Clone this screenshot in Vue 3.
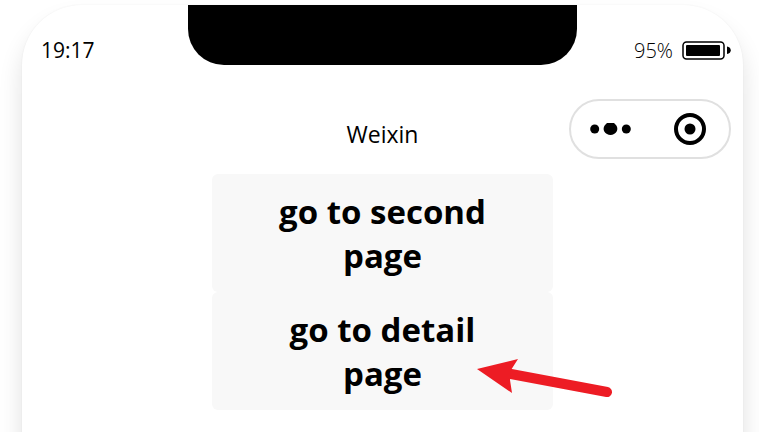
<script setup>
const time = '19:17'
const battery = 95
const title = 'Weixin'
const pages = [
  { name: 'second', marked: false },
  { name: 'detail', marked: true },
]
</script>

<template>
  <div class="stage">
    <div class="phone">
      <header class="status">
        <span class="time">{{ time }}</span>
        <div class="notch"></div>
        <div class="power">
          <span class="percent">{{ battery }}%</span>
          <svg class="battery" width="49" height="20" viewBox="0 0 49 20" aria-hidden="true">
            <rect x="1" y="1" width="41" height="17" rx="3.5" fill="#fff" stroke="#000" stroke-width="1.5" />
            <rect x="4" y="4" width="34" height="11" rx="1" fill="#000" />
            <path d="M45 5.5c5 .5 5 7 0 7.5z" fill="#000" />
          </svg>
        </div>
      </header>

      <nav class="navbar">
        <h1 class="title">{{ title }}</h1>
        <div class="capsule">
          <button class="capsule-button" type="button" aria-label="More">
            <svg width="42" height="14" viewBox="0 0 42 14">
              <circle cx="4.7" cy="7" r="4.5" />
              <path d="M17 .9h7c4.500 3.500 4.500 8.500 0 11-2 1.300-5 1.300-7 0-4.500-2.500-4.500-7.500 0-11z" />
              <circle cx="36.3" cy="7" r="4.5" />
            </svg>
          </button>
          <button class="capsule-button" type="button" aria-label="Close">
            <svg width="32" height="32" viewBox="0 0 32 32">
              <circle cx="16" cy="16" r="14" fill="none" stroke="#000" stroke-width="4" />
              <circle cx="16" cy="16" r="5.5" />
            </svg>
          </button>
        </div>
      </nav>

      <main class="content">
        <div v-for="page in pages" :key="page.name" class="entry">
          <button class="go" type="button">go to {{ page.name }} page</button>
          <svg v-if="page.marked" class="arrow" width="138" height="44" viewBox="0 0 138 44" aria-hidden="true">
            <path d="M35 17L131 35" stroke="#ed1c24" stroke-width="10" stroke-linecap="round" />
            <path d="M1 12L42 2L35 13L34 23L36 36z" fill="#ed1c24" />
          </svg>
        </div>
      </main>
    </div>
  </div>
</template>

<style>
body {
  background: #fff;
}
</style>

<style scoped>
.stage {
  box-sizing: border-box;
  height: 100vh;
  padding: 5px 16px 0 22px;
  overflow: hidden;
  font-family: "Open Sans", "Noto Sans", sans-serif;
  color: #000;
}

.phone {
  min-height: 120vh;
  border-radius: 60px;
  background: #fff;
  box-shadow: 0 0 2px rgba(0, 0, 0, 0.06), 0 16px 24px rgba(0, 0, 0, 0.12);
}

.status {
  display: grid;
  grid-template-columns: 1fr 54% 1fr;
}

.time {
  padding: 30px 0 0 19px;
  font-size: 21px;
  line-height: 30px;
}

.notch {
  height: 60px;
  border-radius: 0 0 36px 36px;
  background: #000;
}

.power {
  display: flex;
  justify-content: flex-end;
  align-items: center;
  gap: 9px;
  padding: 32px 12px 0 0;
}

.percent {
  font-size: 20px;
  font-weight: 300;
  line-height: 28px;
}

.battery {
  flex: none;
}

.navbar {
  display: grid;
  grid-template-columns: 1fr auto 1fr;
  align-items: center;
  padding: 34px 12px 15px;
}

.title {
  grid-column: 2;
  margin: 0;
  padding-top: 10px;
  font-size: 23px;
  font-weight: 400;
  line-height: 32px;
}

.capsule {
  justify-self: end;
  display: grid;
  grid-template-columns: 1fr 1fr;
  box-sizing: border-box;
  width: 162px;
  height: 60px;
  border: 2px solid #e0e0e0;
  border-radius: 30px;
}

.capsule-button {
  display: flex;
  align-items: center;
  justify-content: center;
  padding: 0;
  border: 0;
  background: none;
}

.content {
  display: flex;
  flex-direction: column;
  align-items: center;
}

.entry {
  position: relative;
  display: flex;
  width: 47.2%;
}

.go {
  flex: 1;
  padding: 16px 48px 14px;
  border: 0;
  border-radius: 6px;
  background: #f8f8f8;
  color: #000;
  font-family: inherit;
  font-size: 33px;
  font-weight: 700;
  line-height: 44px;
  text-align: center;
}

.arrow {
  position: absolute;
  top: 65px;
  left: 264px;
  fill: none;
}
</style>
